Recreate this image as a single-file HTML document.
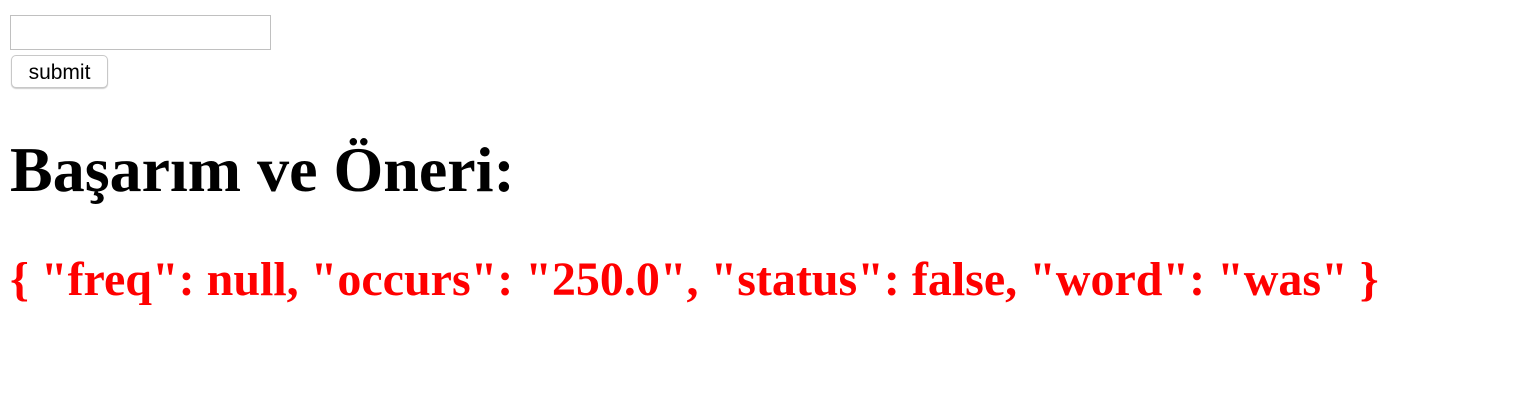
<!DOCTYPE html>
<html><head><meta charset="utf-8"><style>
body{margin:0;background:#fff;width:1514px;height:400px;overflow:hidden;position:relative}
.inp{position:absolute;left:10px;top:15px;width:259px;height:33px;border:1px solid #c0c0c0;box-sizing:content-box}
.btn{position:absolute;left:11px;top:55px;width:95px;height:31px;border:1px solid #c8c8c8;border-radius:5px;box-shadow:0 1px 1px rgba(0,0,0,.2);font:21px "Liberation Sans",sans-serif;text-align:center;line-height:33px;color:#000;background:#fff}
.h{position:absolute;left:10px;font-family:"Liberation Serif",serif;font-weight:bold;white-space:nowrap;line-height:1;margin:0}
.h1{top:138px;font-size:64px;color:#000}
.h2{top:256px;font-size:48px;color:#f00}
</style></head><body>
<div class="inp"></div>
<div class="btn">submit</div>
<h1 class="h h1">Başarım ve Öneri:</h1>
<h2 class="h h2">{ "freq": null, "occurs": "250.0", "status": false, "word": "was" }</h2>
</body></html>
